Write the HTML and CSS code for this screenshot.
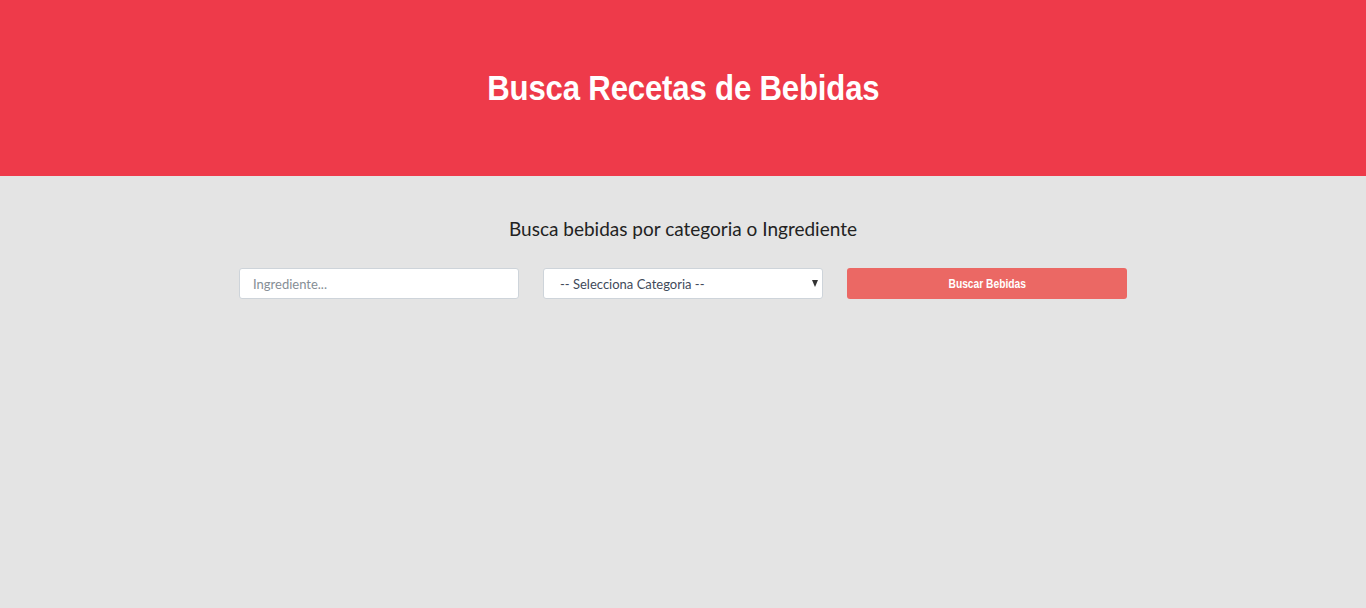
FILE: index.html
```html
<!DOCTYPE html>
<html lang="es">
<head>
<meta charset="utf-8">
<title>Busca Recetas de Bebidas</title>
<link rel="stylesheet" href="styles.css">
</head>
<body>
<header class="hero">
  <h1 class="hero-title">Busca Recetas de Bebidas</h1>
</header>
<main class="search">
  <h2 class="search-lead">Busca bebidas por categoria o Ingrediente</h2>
  <form class="search-form">
    <input class="field" type="text" placeholder="Ingrediente...">
    <div class="select-wrap">
      <select class="field select">
        <option>-- Selecciona Categoria --</option>
      </select>
      <span class="caret"></span>
    </div>
    <button class="btn" type="button"><span class="btn-label">Buscar Bebidas</span></button>
  </form>
</main>
</body>
</html>
```
FILE: styles.css
```css
* { box-sizing: border-box; }
html, body { margin: 0; padding: 0; }
body {
  background: #e4e4e4;
  font-family: Lato, "Open Sans", sans-serif;
  color: #222;
  height: 608px;
}
.hero {
  background: #ee3a4a;
  height: 176px;
  display: flex;
  align-items: center;
  justify-content: center;
  padding-bottom: 2px;
}
.hero-title {
  margin: 0;
  color: #fff;
  font-family: "Liberation Sans", Arial, sans-serif;
  font-weight: 700;
  font-size: 35px;
  letter-spacing: -0.2px;
  line-height: 1;
  display: inline-block;
  transform: scaleX(0.89);
}
.search {
  padding-top: 41px;
}
.search-lead {
  margin: 0 0 27px;
  text-align: center;
  font-weight: 400;
  font-size: 19px;
  line-height: 24px;
  color: #222;
}
.search-form {
  display: flex;
  justify-content: center;
  gap: 24px;
}
.field {
  width: 280px;
  height: 31px;
  border: 1px solid #ced4da;
  border-radius: 3px;
  background: #fff;
  font-family: Lato, sans-serif;
  font-size: 13px;
  color: #495057;
  padding: 0 13px;
  outline: none;
}
.field::placeholder { color: #868e96; }
.select-wrap { position: relative; width: 280px; }
.select {
  appearance: none;
  -webkit-appearance: none;
  padding-left: 16px;
  color: #3f4a5a;
}
.caret {
  position: absolute;
  right: 5px;
  top: 12px;
  width: 0;
  height: 0;
  border-left: 3.5px solid transparent;
  border-right: 3.5px solid transparent;
  border-top: 7px solid #333;
}
.btn {
  width: 280px;
  height: 31px;
  border: 0;
  border-radius: 3px;
  background: #eb6864;
  color: #fff;
  cursor: pointer;
  padding: 0;
}
.btn-label {
  display: inline-block;
  font-family: "Liberation Sans", Arial, sans-serif;
  font-weight: 700;
  font-size: 12.5px;
  transform: scaleX(0.82);
}
```
